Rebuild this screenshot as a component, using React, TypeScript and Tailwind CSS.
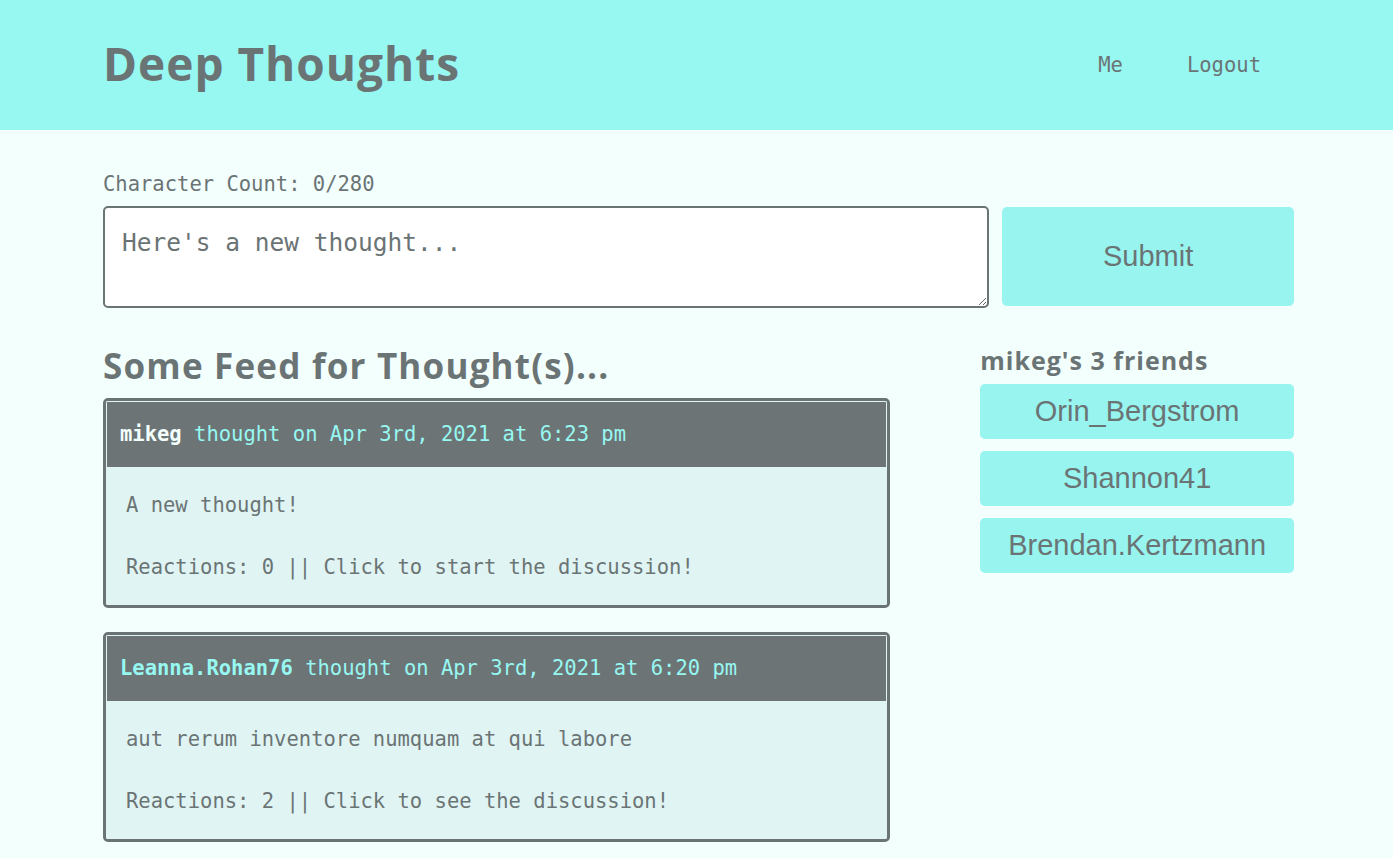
import React from 'react';

const mono = "font-['DejaVu_Sans_Mono','Liberation_Mono',monospace]";
const karla = "font-['Open_Sans','Lato',sans-serif]";

const thoughts = [
  {
    user: 'mikeg',
    self: true,
    date: 'Apr 3rd, 2021 at 6:23 pm',
    text: 'A new thought!',
    reactions: 'Reactions: 0 || Click to start the discussion!',
  },
  {
    user: 'Leanna.Rohan76',
    self: false,
    date: 'Apr 3rd, 2021 at 6:20 pm',
    text: 'aut rerum inventore numquam at qui labore',
    reactions: 'Reactions: 2 || Click to see the discussion!',
  },
];

const friends = ['Orin_Bergstrom', 'Shannon41', 'Brendan.Kertzmann'];

export default function App() {
  return (
    <div className="min-h-screen bg-[#f3fffd] text-[#6b7475]">
      {/* Header */}
      <header className="bg-[#97f7f1] h-[130px]">
        <div className="mx-[103px] h-full flex items-center justify-between">
          <h1 className={`${karla} text-[46px] font-bold tracking-[1px] pb-[3px]`}>Deep Thoughts</h1>
          <nav className={`${mono} text-[20.5px] flex gap-[64px] pr-[29px]`}>
            <a>Me</a>
            <a>Logout</a>
          </nav>
        </div>
      </header>

      <main className="mx-[99px] pl-[4px] pt-[40px]">
        {/* Thought form */}
        <p className={`${mono} text-[20.5px] leading-[28px] mb-[8px]`}>Character Count: 0/280</p>
        <div className="flex gap-[13px] items-start">
          <textarea
            placeholder="Here's a new thought..."
            className={`${mono} w-[887px] h-[102px] bg-white border-2 border-[#6b7475] rounded-[5px] px-[17px] pt-[20px] text-[24.5px] leading-[30px] placeholder:text-[#6b7475] outline-none`}
          />
          <button className="w-[292px] h-[99px] mt-[1px] bg-[#97f4ef] rounded-[5px] font-['Liberation_Sans',Arial,sans-serif] text-[29px]">
            Submit
          </button>
        </div>

        <div className="flex gap-[90px] mt-[36px]">
          {/* Feed */}
          <section className="w-[788px]">
            <h2 className={`${karla} text-[35px] font-bold tracking-[1.2px] leading-[44px] mb-[10px]`}>Some Feed for Thought(s)...</h2>
            <div className="flex flex-col gap-[24px]">
              {thoughts.map((t) => (
                <div key={t.user} className="border-[3px] border-[#6b7475] rounded-[5px] overflow-hidden">
                  <div className={`${mono} bg-[#6c7476] text-[#97f7f1] text-[20.5px] h-[66px] flex items-center px-[13px] border-[1px] border-[#e0f4f3] border-b-0`}>
                    <span className={`font-bold ${t.self ? 'text-[#f3fffd]' : 'text-[#97f7f1]'}`}>{t.user}</span>
                    <span>&nbsp;thought on {t.date}</span>
                  </div>
                  <div className={`${mono} bg-[#e0f4f3] text-[20.5px] px-[20px] pt-[24px] pb-[24px] leading-[28px]`}>
                    <p>{t.text}</p>
                    <p className="mt-[34px]">{t.reactions}</p>
                  </div>
                </div>
              ))}
            </div>
          </section>

          {/* Friends */}
          <aside className="w-[314px]">
            <h3 className={`${karla} text-[25px] font-bold tracking-[1px] leading-[32px] mb-[8px]`}>mikeg's 3 friends</h3>
            <div className="flex flex-col gap-[12px]">
              {friends.map((f) => (
                <button
                  key={f}
                  className="h-[55px] bg-[#97f4ef] rounded-[5px] font-['Liberation_Sans',Arial,sans-serif] text-[29px]"
                >
                  {f}
                </button>
              ))}
            </div>
          </aside>
        </div>
      </main>
    </div>
  );
}
